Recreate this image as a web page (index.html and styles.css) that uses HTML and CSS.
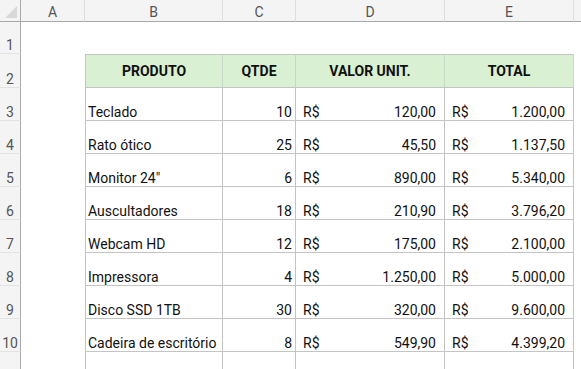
FILE: index.html
```html
<!DOCTYPE html>
<html lang="pt">
<head>
<meta charset="utf-8">
<link rel="stylesheet" href="styles.css">
</head>
<body>
<div class="sheet">
  <div class="corner"><span class="tri"></span></div>
  <div class="ch">A</div>
  <div class="ch">B</div>
  <div class="ch">C</div>
  <div class="ch">D</div>
  <div class="ch">E</div>
  <div class="ch last"></div>

  <div class="rh r1">1</div>
  <div class="c r1"></div><div class="c r1"></div><div class="c r1"></div><div class="c r1"></div><div class="c r1"></div><div class="c r1"></div>

  <div class="rh r2">2</div>
  <div class="c r2"></div>
  <div class="t hd b">PRODUTO</div>
  <div class="t hd">QTDE</div>
  <div class="t hd">VALOR UNIT.</div>
  <div class="t hd">TOTAL</div>
  <div class="c r2"></div>

  <div class="rh">3</div><div class="c"></div>
  <div class="t b">Teclado</div><div class="t n">10</div>
  <div class="t m"><span>R$</span><span>120,00</span></div>
  <div class="t m"><span>R$</span><span>1.200,00</span></div><div class="c"></div>

  <div class="rh">4</div><div class="c"></div>
  <div class="t b">Rato ótico</div><div class="t n">25</div>
  <div class="t m"><span>R$</span><span>45,50</span></div>
  <div class="t m"><span>R$</span><span>1.137,50</span></div><div class="c"></div>

  <div class="rh">5</div><div class="c"></div>
  <div class="t b">Monitor 24"</div><div class="t n">6</div>
  <div class="t m"><span>R$</span><span>890,00</span></div>
  <div class="t m"><span>R$</span><span>5.340,00</span></div><div class="c"></div>

  <div class="rh">6</div><div class="c"></div>
  <div class="t b">Auscultadores</div><div class="t n">18</div>
  <div class="t m"><span>R$</span><span>210,90</span></div>
  <div class="t m"><span>R$</span><span>3.796,20</span></div><div class="c"></div>

  <div class="rh">7</div><div class="c"></div>
  <div class="t b">Webcam HD</div><div class="t n">12</div>
  <div class="t m"><span>R$</span><span>175,00</span></div>
  <div class="t m"><span>R$</span><span>2.100,00</span></div><div class="c"></div>

  <div class="rh">8</div><div class="c"></div>
  <div class="t b">Impressora</div><div class="t n">4</div>
  <div class="t m"><span>R$</span><span>1.250,00</span></div>
  <div class="t m"><span>R$</span><span>5.000,00</span></div><div class="c"></div>

  <div class="rh">9</div><div class="c"></div>
  <div class="t b">Disco SSD 1TB</div><div class="t n">30</div>
  <div class="t m"><span>R$</span><span>320,00</span></div>
  <div class="t m"><span>R$</span><span>9.600,00</span></div><div class="c"></div>

  <div class="rh">10</div><div class="c"></div>
  <div class="t b">Cadeira de escritório</div><div class="t n">8</div>
  <div class="t m"><span>R$</span><span>549,90</span></div>
  <div class="t m"><span>R$</span><span>4.399,20</span></div><div class="c"></div>

  <div class="rh r11"></div><div class="c r11"></div>
  <div class="t b r11"></div><div class="t r11"></div><div class="t r11"></div><div class="t r11"></div><div class="c r11"></div>
</div>
</body>
</html>
```
FILE: styles.css
```css
* { box-sizing: border-box; margin: 0; padding: 0; }
html, body { width: 581px; height: 369px; overflow: hidden; background: #ffffff; }
body { font-family: Roboto, "Liberation Sans", sans-serif; font-size: 14px; color: #111; }

.sheet {
  display: grid;
  grid-template-columns: 21px 64px 138px 73px 149px 129px 8px;
  grid-template-rows: 22px 32px 34px repeat(8, 33px) 18px;
  width: 581px;
}

.corner {
  background: #f4f4f4;
  border-right: 1px solid #a8a8a8;
  border-bottom: 1px solid #a8a8a8;
  position: relative;
}
.tri {
  position: absolute;
  right: 3px;
  bottom: 3px;
  width: 0;
  height: 0;
  border-left: 12px solid transparent;
  border-bottom: 12px solid #d8d8d8;
}

.ch {
  background: #f4f4f4;
  border-bottom: 1px solid #a8a8a8;
  border-right: 1px solid #dedede;
  color: #555;
  font-size: 14px;
  display: flex;
  align-items: center;
  justify-content: center;
  padding-top: 3px;
}
.ch.last { border-right: none; }

.rh {
  background: #f4f4f4;
  border-right: 1px solid #a8a8a8;
  border-bottom: 1px solid #e2e2e2;
  color: #555;
  font-size: 14px;
  display: flex;
  align-items: flex-end;
  justify-content: center;
  padding-bottom: 0;
}

.c { background: #fff; }

.t {
  border-right: 1px solid #c4c4c4;
  border-bottom: 1px solid #c4c4c4;
  display: flex;
  align-items: flex-end;
  padding: 0 8px 0 2px;
  white-space: nowrap;
}
.t.b { border-left: 1px solid #c4c4c4; padding-left: 2px; }

.hd {
  background: #d9f0d3;
  border-top: 1px solid #c4c4c4;
  border-right-color: #c8d8c4;
  border-bottom-color: #c4c4c4;
  font-weight: 700;
  justify-content: center;
  align-items: center;
  padding: 0;
}
.t.hd.b { padding-left: 0; }

.n { justify-content: flex-end; padding-right: 3px; }
.m { justify-content: space-between; padding-left: 7px; padding-right: 8px; }
.r11 { border-bottom: none; }
.rh.r11 { border-bottom: none; }
```
